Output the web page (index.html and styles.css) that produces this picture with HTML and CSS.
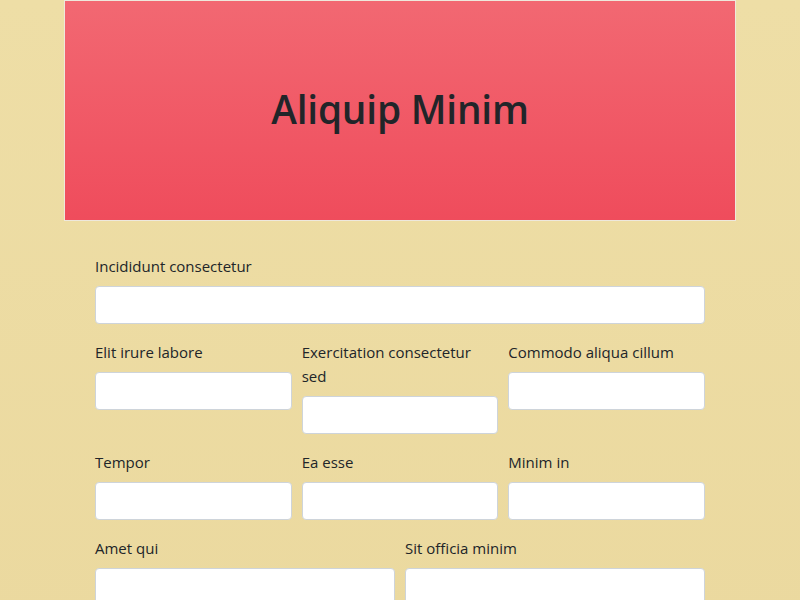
FILE: index.html
```html
<!DOCTYPE html>
<html>
<head>
<meta charset="utf-8">
<link rel="stylesheet" href="styles.css">
</head>
<body>
<div class="container">
  <header class="hero">
    <h1 class="title">Aliquip Minim</h1>
  </header>
  <form class="form">
    <div class="group">
      <label class="label">Incididunt consectetur</label>
      <input class="input" type="text">
    </div>
    <div class="row three">
      <div class="group">
        <label class="label">Elit irure labore</label>
        <input class="input" type="text">
      </div>
      <div class="group">
        <label class="label">Exercitation consectetur sed</label>
        <input class="input" type="text">
      </div>
      <div class="group">
        <label class="label">Commodo aliqua cillum</label>
        <input class="input" type="text">
      </div>
    </div>
    <div class="row three">
      <div class="group">
        <label class="label">Tempor</label>
        <input class="input" type="text">
      </div>
      <div class="group">
        <label class="label">Ea esse</label>
        <input class="input" type="text">
      </div>
      <div class="group">
        <label class="label">Minim in</label>
        <input class="input" type="text">
      </div>
    </div>
    <div class="row two">
      <div class="group">
        <label class="label">Amet qui</label>
        <input class="input" type="text">
      </div>
      <div class="group">
        <label class="label">Sit officia minim</label>
        <input class="input" type="text">
      </div>
    </div>
  </form>
</div>
</body>
</html>
```

FILE: styles.css
```css
* { box-sizing: border-box; }
html, body { margin: 0; padding: 0; }
body {
  background: linear-gradient(180deg, #eedea6 0%, #ebd99f 100%);
  min-height: 600px;
  font-family: "Open Sans", "Noto Sans", sans-serif;
  font-size: 15px;
  line-height: 24px;
  color: #212529;
}
.container {
  width: 672px;
  margin: 0 auto;
}
.hero {
  height: 221px;
  padding-bottom: 4px;
  border: 1px solid #eee8dc;
  background: linear-gradient(180deg, #f26872 0%, #ef4c5c 100%);
  display: flex;
  align-items: center;
  justify-content: center;
}
.title {
  margin: 0;
  font-size: 38.8px;
  font-weight: 600;
  line-height: 48px;
  color: #212529;
  letter-spacing: -0.2px;
}
.form {
  padding: 33px 31px 0 31px;
}
.group {
  display: flex;
  flex-direction: column;
  margin-bottom: 16px;
  min-width: 0;
}
.label {
  margin-bottom: 8px;
}
.input {
  height: 38px;
  width: 100%;
  border: 1px solid #ced4da;
  border-radius: 4px;
  background: #fff;
  font: inherit;
  padding: 6px 12px;
}
.row {
  display: grid;
  column-gap: 10px;
}
.three { grid-template-columns: 1fr 1fr 1fr; }
.two { grid-template-columns: 1fr 1fr; }
```
